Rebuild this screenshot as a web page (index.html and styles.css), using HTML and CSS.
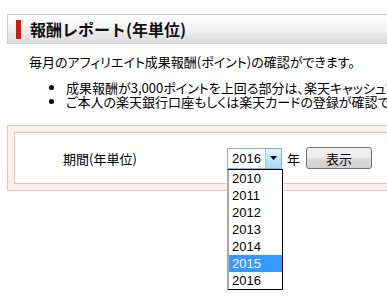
FILE: index.html
```html
<!DOCTYPE html>
<html lang="ja">
<head>
    <meta charset="UTF-8">
    <title>報酬レポート(年単位)</title>
    <link rel="stylesheet" href="styles.css">
</head>
<body>
    <div class="page">
        <div class="content">
            <!-- 見出し -->
            <h2 class="title"><span class="title-mark"></span>報酬レポート(年単位)</h2>

            <p class="lead">毎月のアフィリエイト成果報酬(ポイント)の確認ができます。</p>

            <ul class="notes">
                <li>成果報酬が3,000ポイントを上回る部分は、楽天キャッシュでのお支払いとなります。</li>
                <li>ご本人の楽天銀行口座もしくは楽天カードの登録が確認できない場合はお支払いできません。</li>
            </ul>

            <!-- 期間の選択 -->
            <div class="form-frame">
                <div class="form-box">
                    <span class="form-label">期間(年単位)</span>
                    <div class="year-select">
                        <span class="year-value">2016</span>
                        <span class="year-arrow">
                            <svg width="7" height="4" viewBox="0 0 7 4"><path d="M0 0H7L3.5 4Z" fill="#000"/></svg>
                        </span>
                        <ul class="year-options">
                            <li>2010</li>
                            <li>2011</li>
                            <li>2012</li>
                            <li>2013</li>
                            <li>2014</li>
                            <li class="selected">2015</li>
                            <li>2016</li>
                        </ul>
                    </div>
                    <span class="year-unit">年</span>
                    <button class="show-button">表示</button>
                </div>
            </div>
        </div>
    </div>
</body>
</html>
```

FILE: styles.css
```css
html, body {
    margin: 0;
    background-color: #ffffff;
}

body {
    font-family: "Noto Sans CJK JP", "Liberation Sans", sans-serif;
    font-size: 13px;
    color: #000000;
}

/* 画面幅で切る（ドロップダウンが収まる高さを確保） */
.page {
    width: 100%;
    height: 299px;
    overflow: hidden;
}

.content {
    width: 720px;
    padding-top: 14px;
    padding-left: 7px;
}

/* 見出し */
.title {
    display: flex;
    align-items: center;
    height: 28px;
    margin: 0;
    border: 1px solid #cccccc;
    background: linear-gradient(#ffffff, #f3f3f3 45%, #dcdcdc);
    font-size: 16px;
    font-weight: bold;
    line-height: 28px;
    color: #111111;
}

.title-mark {
    width: 5px;
    height: 19px;
    margin-left: 8px;
    margin-right: 9px;
    background-color: #d6170c;
}

.lead {
    margin: 11px 0 0 22px;
    line-height: 14px;
    white-space: nowrap;
    font-feature-settings: "palt";
}

.notes {
    margin: 12px 0 0 0;
    padding-left: 59px;
    line-height: 14px;
    white-space: nowrap;
    font-feature-settings: "palt";
}

/* フォーム枠 */
.form-frame {
    margin-top: 16px;
    padding: 6px;
    border: 1px solid #fbbcbc;
    background-color: #ffeeee;
}

.form-box {
    display: flex;
    align-items: center;
    padding: 14px 0 14px 48px;
    border: 1px solid #fbbcbc;
    background-color: #ffffff;
}

.form-label {
    width: 164px;
    line-height: 21px;
}

.year-select {
    position: relative;
    display: flex;
    width: 53px;
    height: 19px;
    border: 1px solid #7eb4ea;
    font-family: "Liberation Sans", sans-serif;
    font-size: 13px;
}

.year-value {
    flex: 1;
    padding-left: 4px;
    line-height: 19px;
}

.year-arrow {
    display: flex;
    align-items: center;
    justify-content: center;
    width: 15px;
    border-left: 1px solid #9ac8ee;
    background: linear-gradient(#eaf6fd, #bee6fd 50%, #a7d9f5);
}

.year-options {
    position: absolute;
    top: 20px;
    left: -1px;
    z-index: 1;
    width: 53px;
    margin: 0;
    padding: 0;
    list-style: none;
    border: 1px solid #000000;
    border-left: 2px solid #a8a8a8;
    background-color: #ffffff;
}

.year-options li {
    height: 17px;
    padding-left: 3px;
    line-height: 17px;
}

.year-options .selected {
    background-color: #3399ff;
    color: #ffffff;
}

.year-unit {
    margin-left: 5px;
    line-height: 21px;
}

.show-button {
    width: 66px;
    height: 22px;
    margin-left: 6px;
    padding: 0;
    border: 1px solid #707070;
    border-radius: 3px;
    background: linear-gradient(#f2f2f2, #ebebeb 50%, #dddddd 51%, #cfcfcf);
    font-family: "Noto Sans CJK JP", sans-serif;
    font-size: 13px;
    color: #000000;
}
```
